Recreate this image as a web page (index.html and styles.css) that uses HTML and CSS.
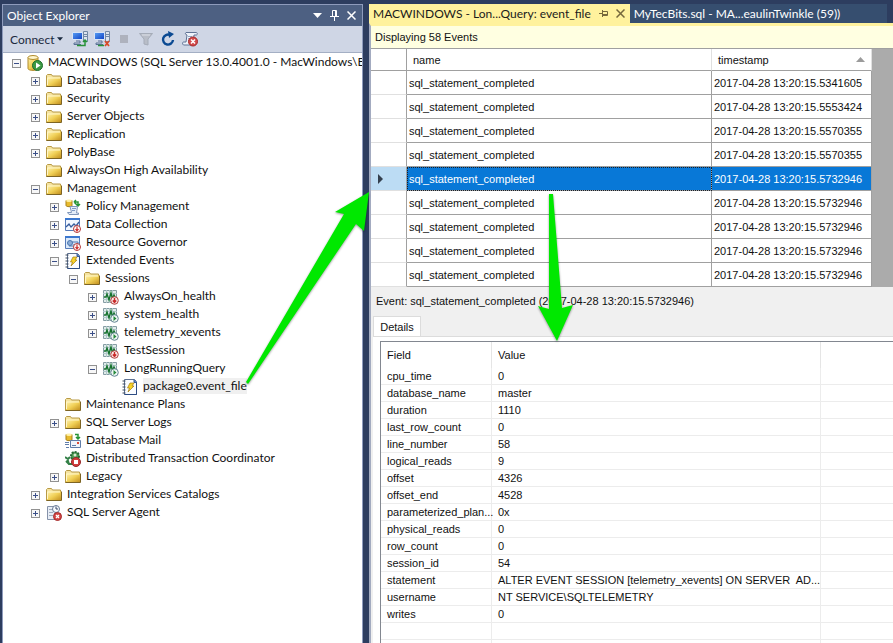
FILE: index.html
```html
<!DOCTYPE html>
<html lang="en">
<head>
	<meta charset="UTF-8">
	<title>Object Explorer</title>
	<link rel="stylesheet" href="styles.css">
</head>
<body>
	<svg class="sprite" width="0" height="0" aria-hidden="true">
		<defs>
			<linearGradient id="gold" x1="0" y1="0" x2="1" y2="1">
				<stop offset="0" stop-color="#fff3b0"/><stop offset=".5" stop-color="#f0cf55"/><stop offset="1" stop-color="#c08c1c"/>
			</linearGradient>
			<linearGradient id="screen" x1="0" y1="0" x2="1" y2="1">
				<stop offset="0" stop-color="#5aa0f5"/><stop offset="1" stop-color="#0b3fc4"/>
			</linearGradient>
		</defs>
		<symbol id="plus" viewBox="0 0 9 9">
			<rect x=".5" y=".5" width="8" height="8" fill="#f7f7f7" stroke="#919191"/>
			<path d="M2 4.500h5M4.500 2v5" stroke="#3b4f88"/>
		</symbol>
		<symbol id="minus" viewBox="0 0 9 9">
			<rect x=".5" y=".5" width="8" height="8" fill="#f7f7f7" stroke="#919191"/>
			<path d="M2 4.500h5" stroke="#3b4f88"/>
		</symbol>
		<symbol id="folder" viewBox="0 0 16 16">
			<path d="M.5 13.500v-11l1-1h4l1 1.500h8v10.500z" fill="#f5e3a0" stroke="#b89a45"/>
			<path d="M1 4.500h14v9H1z" fill="url(#gold)"/>
			<path d="M.5 13.500h15v-9" fill="none" stroke="#7d6423"/>
			<path d="M1.500 12V5H14" fill="none" stroke="#fff6c8"/>
		</symbol>
		<symbol id="server" viewBox="0 0 16 16">
			<path d="M1 2.500v11C1 16 11 16 11 13.500v-11z" fill="url(#gold)" stroke="#b08a2a"/>
			<ellipse cx="6" cy="2.500" rx="5" ry="2" fill="#fff6cc" stroke="#b08a2a"/>
			<circle cx="10.500" cy="10.500" r="5" fill="#3c9a44" stroke="#1d6b2c"/>
			<path d="M9 7.500l4.500 3L9 13.500z" fill="#fff"/>
		</symbol>
		<symbol id="policy" viewBox="0 0 16 16">
			<path d="M1 1.500v5c0 1.500 6 1.500 6 0v-5z" fill="#e8bb2d" stroke="#a9811b"/>
			<ellipse cx="4" cy="1.800" rx="3" ry="1.200" fill="#fff0a5"/>
			<path d="M9 3h4v4M9 3l2-2M9 3l2 2M11 5l2 2 2-2" fill="none" stroke="#269336" stroke-width="1.500"/>
			<path d="M5 7.500h7.500l-1 6.500h2v1.500H4l-1.500-2h4z" fill="#e4edf8" stroke="#8197ba"/>
			<path d="M7 9.500h4M7 11.500h3" stroke="#7f9ac5"/>
		</symbol>
		<symbol id="collection" viewBox="0 0 16 16">
			<path d="M.5 1.500h14v12H.5z" fill="#f2f7ff" stroke="#567bb9"/>
			<path d="M0 1h15v2H0z" fill="#3b78d0"/>
			<path d="M1 10l3-3 2 3 3-3 2 2 3-4" fill="none" stroke="#365b9c" stroke-width="1.300"/>
			<circle cx="12" cy="12" r="3.500" fill="#fff" stroke="#b33838"/>
			<path d="M12 9.500v4M10.500 12l1.500 2 1.500-2" fill="none" stroke="#cf3030" stroke-width="1.200"/>
		</symbol>
		<symbol id="governor" viewBox="0 0 16 16">
			<path d="M.5 1.500h14v12H.5z" fill="#dbe9fa" stroke="#567bb9"/>
			<path d="M0 1h15v2H0z" fill="#3b78d0"/>
			<circle cx="5" cy="8" r="2.500" fill="#8bacd6" stroke="#4c78b1"/>
			<path d="M7 7h6v3H8M4 11h4" fill="none" stroke="#4c78b1"/>
			<circle cx="12" cy="12" r="3.500" fill="#fff" stroke="#b33838"/>
			<path d="M12 9.500v4M10.500 12l1.500 2 1.500-2" fill="none" stroke="#cf3030" stroke-width="1.200"/>
		</symbol>
		<symbol id="events" viewBox="0 0 16 16">
			<path d="M2.500.5h10l2 2v13h-12z" fill="#fafcff" stroke="#5e7190"/>
			<path d="M14.500 3v12.500h-12" fill="none" stroke="#2d4c83"/>
			<path d="M12 .5v3h3" fill="#587dbe" stroke="#385c99"/>
			<path d="M.5 2h3M.5 5h3M.5 8h3M.5 11h3M.5 14h3" stroke="#3c4a5e"/>
			<path d="M8 4h4l-2 3h2l-6 6 1.500-4H5.500z" fill="#f7d327" stroke="#a37b14" stroke-width=".7"/>
		</symbol>
		<symbol id="session" viewBox="0 0 16 16">
			<path d="M.5 1.500h13v12H.5z" fill="#e1ecea" stroke="#869da4"/>
			<path d="M3.500 1v13M6.500 1v13M9.500 1v13M0 4.500h14M0 10.500h14" stroke="#b0c7ca"/>
			<path d="M1 8h2l1-3 2 6 2-7 1.500 6L11 6l1 2" fill="none" stroke="#15722d" stroke-width="1.400"/>
		</symbol>
		<symbol id="stopped" viewBox="0 0 16 16">
			<use href="#session"/>
			<circle cx="11.500" cy="11.500" r="3.800" fill="#f9e5e3" stroke="#b54242"/>
			<path d="M11.500 9v4M9.800 11.500l1.700 2 1.700-2" fill="none" stroke="#c92929" stroke-width="1.400"/>
		</symbol>
		<symbol id="running" viewBox="0 0 16 16">
			<use href="#session"/>
			<circle cx="11.500" cy="11.500" r="3.800" fill="#eef7f3" stroke="#648493"/>
			<path d="M10.500 9l3 2.500-3 2.500z" fill="#24883a"/>
		</symbol>
		<symbol id="mail" viewBox="0 0 16 16">
			<path d="M1 1.500v5c0 1.500 6 1.500 6 0v-5z" fill="#e8bb2d" stroke="#a9811b"/>
			<ellipse cx="4" cy="1.800" rx="3" ry="1.200" fill="#fff0a5"/>
			<path d="M10 1.500h3V5M11 4l2 2 2-2" fill="none" stroke="#269336" stroke-width="1.500"/>
			<path d="M5.500 7.500h10v7h-10z" fill="#f1f5fb" stroke="#607da9"/>
			<path d="M7 12.500h4M0 9.500h4M0 11.500h4M1 14.500h3" stroke="#607da9"/>
			<path d="M12 9h2v2h-2z" fill="#dd4b37"/>
		</symbol>
		<symbol id="coordinator" viewBox="0 0 16 16">
			<circle cx="10" cy="5" r="4" fill="#4c9951" stroke="#246934" stroke-dasharray="2 1" stroke-width="2"/>
			<circle cx="10" cy="4" r="1.500" fill="#d9ead5"/>
			<path d="M0 6l3 2 2-2M2 7l2 6h4M1 10l3 3" fill="none" stroke="#338047" stroke-width="2"/>
			<circle cx="11" cy="11" r="4.500" fill="#d13d3d" stroke="#962727"/>
			<path d="M9 9h4v4H9z" fill="#fff"/>
		</symbol>
		<symbol id="agent" viewBox="0 0 16 16">
			<path d="M1.500 1.500h8v13h-8z" fill="#e7edf6" stroke="#8592aa"/>
			<path d="M3 4.500h4M3 7.500h4M3 10.500h4" stroke="#a0abbd"/>
			<circle cx="10" cy="4" r="3.500" fill="#f8fbff" stroke="#667996"/>
			<path d="M10 1.500V4h2" fill="none" stroke="#34476a"/>
			<circle cx="11.500" cy="11.500" r="4" fill="#d54545" stroke="#a32b2b"/>
			<path d="M10 10l3 3M13 10l-3 3" stroke="#fff" stroke-width="1.300"/>
		</symbol>
		<symbol id="computer" viewBox="0 0 16 16">
			<path d="M11.500.5h4v10h-4z" fill="#dce4ee" stroke="#7288a5"/>
			<path d="M12 3.500h3M12 5.500h3" stroke="#7288a5"/>
			<path d="M.5 1.500h10v7H.5z" fill="url(#screen)" stroke="#d7e4f7"/>
			<path d="M4 10h4v2H2v1.500h7" fill="none" stroke="#587195"/>
		</symbol>
		<symbol id="connect" viewBox="0 0 16 16">
			<use href="#computer"/>
			<path d="M5 14.500h8V9M11 11l2-2 2 2" fill="none" stroke="#289338" stroke-width="1.500"/>
		</symbol>
		<symbol id="disconnect" viewBox="0 0 16 16">
			<use href="#computer"/>
			<path d="M4 14.500h6" stroke="#289338" stroke-width="1.500"/>
			<path d="M11 10l4 5M15 10l-4 5" stroke="#d84b28" stroke-width="1.800"/>
		</symbol>
		<symbol id="stop" viewBox="0 0 16 16"><path d="M4 4h8v8H4z" fill="#aeb2bd"/></symbol>
		<symbol id="filter" viewBox="0 0 16 16">
			<path d="M1.500 2.500h13L10 8v6l-4-1V8z" fill="#b8bdc7" stroke="#a5acb8"/>
			<path d="M4 4h8" stroke="#dce0e8"/>
		</symbol>
		<symbol id="refresh" viewBox="0 0 16 16">
			<path d="M13 9a5 5 0 1 1-3-5" fill="none" stroke="#0b4a92" stroke-width="2.400"/>
			<path d="M8 0l6 3-5 4z" fill="#0b4a92"/>
		</symbol>
		<symbol id="script" viewBox="0 0 16 16">
			<path d="M4 1.500h10.500c1 0 1 2.500 0 2.500H12l-1 10H1.500c-1.500-1-1-3 0-3H4l1-7C3 3.500 3 2 4 1.500z" fill="#edf2fa" stroke="#607496"/>
			<path d="M6 5.500h4M6 7.500h4" stroke="#91a4c0"/>
			<circle cx="11" cy="10.500" r="4.500" fill="#d34a4a" stroke="#a52a2a"/>
			<path d="M9 8.500l4 4M13 8.500l-4 4" stroke="#fff" stroke-width="1.500"/>
		</symbol>
		<symbol id="down" viewBox="0 0 9 9"><path d="M0 2h9L4.500 7z" fill="currentColor"/></symbol>
		<symbol id="pin" viewBox="0 0 9 11"><path d="M2.500 6V.5h4V6M5.500 1v5M0 6.500h9M4.500 7v4" fill="none" stroke="currentColor"/></symbol>
		<symbol id="pin-side" viewBox="0 0 9 9"><path d="M0 4.500h3M3.500 1v7M4 2.500h4.500v4H4M4 5.500h4" fill="none" stroke="currentColor"/></symbol>
		<symbol id="close" viewBox="0 0 9 9"><path d="M.5.5l8 8M8.500.5l-8 8" fill="none" stroke="currentColor" stroke-width="1.500"/></symbol>
	</svg>

	<div class="window">
		<aside class="explorer">
			<header class="title-bar">
				<h1>Object Explorer</h1>
				<button class="small-button" aria-label="Window position"><svg><use href="#down"/></svg></button>
				<button class="small-button" aria-label="Auto hide"><svg class="tall"><use href="#pin"/></svg></button>
				<button class="small-button" aria-label="Close"><svg><use href="#close"/></svg></button>
			</header>
			<div class="toolbar">
				<button class="connect">Connect <svg><use href="#down"/></svg></button>
				<button class="tool" aria-label="Connect Object Explorer"><svg><use href="#connect"/></svg></button>
				<button class="tool" aria-label="Disconnect"><svg><use href="#disconnect"/></svg></button>
				<button class="tool" aria-label="Stop" disabled><svg><use href="#stop"/></svg></button>
				<button class="tool" aria-label="Filter" disabled><svg><use href="#filter"/></svg></button>
				<button class="tool" aria-label="Refresh"><svg><use href="#refresh"/></svg></button>
				<button class="tool" aria-label="Script error"><svg><use href="#script"/></svg></button>
			</div>
			<ul class="tree">
				<li>
					<div class="node"><button class="expander" aria-label="Collapse"><svg><use href="#minus"/></svg></button><svg class="icon"><use href="#server"/></svg><span>MACWINDOWS (SQL Server 13.0.4001.0 - MacWindows\Bea</span></div>
					<ul>
						<li><div class="node"><button class="expander" aria-label="Expand"><svg><use href="#plus"/></svg></button><svg class="icon"><use href="#folder"/></svg><span>Databases</span></div></li>
						<li><div class="node"><button class="expander" aria-label="Expand"><svg><use href="#plus"/></svg></button><svg class="icon"><use href="#folder"/></svg><span>Security</span></div></li>
						<li><div class="node"><button class="expander" aria-label="Expand"><svg><use href="#plus"/></svg></button><svg class="icon"><use href="#folder"/></svg><span>Server Objects</span></div></li>
						<li><div class="node"><button class="expander" aria-label="Expand"><svg><use href="#plus"/></svg></button><svg class="icon"><use href="#folder"/></svg><span>Replication</span></div></li>
						<li><div class="node"><button class="expander" aria-label="Expand"><svg><use href="#plus"/></svg></button><svg class="icon"><use href="#folder"/></svg><span>PolyBase</span></div></li>
						<li><div class="node leaf"><svg class="icon"><use href="#folder"/></svg><span>AlwaysOn High Availability</span></div></li>
						<li>
							<div class="node"><button class="expander" aria-label="Collapse"><svg><use href="#minus"/></svg></button><svg class="icon"><use href="#folder"/></svg><span>Management</span></div>
							<ul>
								<li><div class="node"><button class="expander" aria-label="Expand"><svg><use href="#plus"/></svg></button><svg class="icon"><use href="#policy"/></svg><span>Policy Management</span></div></li>
								<li><div class="node"><button class="expander" aria-label="Expand"><svg><use href="#plus"/></svg></button><svg class="icon"><use href="#collection"/></svg><span>Data Collection</span></div></li>
								<li><div class="node"><button class="expander" aria-label="Expand"><svg><use href="#plus"/></svg></button><svg class="icon"><use href="#governor"/></svg><span>Resource Governor</span></div></li>
								<li>
									<div class="node"><button class="expander" aria-label="Collapse"><svg><use href="#minus"/></svg></button><svg class="icon"><use href="#events"/></svg><span>Extended Events</span></div>
									<ul>
										<li>
											<div class="node"><button class="expander" aria-label="Collapse"><svg><use href="#minus"/></svg></button><svg class="icon"><use href="#folder"/></svg><span>Sessions</span></div>
											<ul>
												<li><div class="node"><button class="expander" aria-label="Expand"><svg><use href="#plus"/></svg></button><svg class="icon"><use href="#stopped"/></svg><span>AlwaysOn_health</span></div></li>
												<li><div class="node"><button class="expander" aria-label="Expand"><svg><use href="#plus"/></svg></button><svg class="icon"><use href="#running"/></svg><span>system_health</span></div></li>
												<li><div class="node"><button class="expander" aria-label="Expand"><svg><use href="#plus"/></svg></button><svg class="icon"><use href="#running"/></svg><span>telemetry_xevents</span></div></li>
												<li><div class="node leaf"><svg class="icon"><use href="#stopped"/></svg><span>TestSession</span></div></li>
												<li>
													<div class="node"><button class="expander" aria-label="Collapse"><svg><use href="#minus"/></svg></button><svg class="icon"><use href="#running"/></svg><span>LongRunningQuery</span></div>
													<ul>
														<li><div class="node leaf"><svg class="icon"><use href="#events"/></svg><span class="selected">package0.event_file</span></div></li>
													</ul>
												</li>
											</ul>
										</li>
									</ul>
								</li>
								<li><div class="node leaf"><svg class="icon"><use href="#folder"/></svg><span>Maintenance Plans</span></div></li>
								<li><div class="node"><button class="expander" aria-label="Expand"><svg><use href="#plus"/></svg></button><svg class="icon"><use href="#folder"/></svg><span>SQL Server Logs</span></div></li>
								<li><div class="node leaf"><svg class="icon"><use href="#mail"/></svg><span>Database Mail</span></div></li>
								<li><div class="node leaf"><svg class="icon"><use href="#coordinator"/></svg><span>Distributed Transaction Coordinator</span></div></li>
								<li><div class="node"><button class="expander" aria-label="Expand"><svg><use href="#plus"/></svg></button><svg class="icon"><use href="#folder"/></svg><span>Legacy</span></div></li>
							</ul>
						</li>
						<li><div class="node"><button class="expander" aria-label="Expand"><svg><use href="#plus"/></svg></button><svg class="icon"><use href="#folder"/></svg><span>Integration Services Catalogs</span></div></li>
						<li><div class="node"><button class="expander" aria-label="Expand"><svg><use href="#plus"/></svg></button><svg class="icon"><use href="#agent"/></svg><span>SQL Server Agent</span></div></li>
					</ul>
				</li>
			</ul>
		</aside>

		<main class="document">
			<nav class="tabs">
				<div class="tab active">
					<a href="#events-grid">MACWINDOWS - Lon...Query: event_file</a>
					<button class="small-button" aria-label="Pin tab"><svg><use href="#pin-side"/></svg></button>
					<button class="small-button" aria-label="Close tab"><svg><use href="#close"/></svg></button>
				</div>
				<div class="tab"><a href="#sql">MyTecBits.sql - MA...eaulinTwinkle (59))</a></div>
			</nav>
			<div class="viewer">
				<p class="count">Displaying 58 Events</p>
				<div class="grid-area">
					<table class="events" id="events-grid">
						<colgroup><col class="col-marker"><col><col class="col-time"></colgroup>
						<thead>
							<tr><th></th><th>name</th><th><div class="sorted">timestamp <svg viewBox="0 0 9 5"><path d="M0 5h9L4.500 0z" fill="#9b9b9b"/></svg></div></th></tr>
						</thead>
						<tbody>
							<tr><td></td><td>sql_statement_completed</td><td>2017-04-28 13:20:15.5341605</td></tr>
							<tr><td></td><td>sql_statement_completed</td><td>2017-04-28 13:20:15.5553424</td></tr>
							<tr><td></td><td>sql_statement_completed</td><td>2017-04-28 13:20:15.5570355</td></tr>
							<tr><td></td><td>sql_statement_completed</td><td>2017-04-28 13:20:15.5570355</td></tr>
							<tr class="current"><td><svg viewBox="0 0 5 10"><path d="M0 0v10l5-5z" fill="#34404e"/></svg></td><td>sql_statement_completed</td><td>2017-04-28 13:20:15.5732946</td></tr>
							<tr><td></td><td>sql_statement_completed</td><td>2017-04-28 13:20:15.5732946</td></tr>
							<tr><td></td><td>sql_statement_completed</td><td>2017-04-28 13:20:15.5732946</td></tr>
							<tr><td></td><td>sql_statement_completed</td><td>2017-04-28 13:20:15.5732946</td></tr>
							<tr><td></td><td>sql_statement_completed</td><td>2017-04-28 13:20:15.5732946</td></tr>
						</tbody>
					</table>
				</div>
				<section class="event">
					<h2>Event: sql_statement_completed (2017-04-28 13:20:15.5732946)</h2>
					<button class="details-tab">Details</button>
					<div class="details-page">
						<table class="details">
							<colgroup><col class="col-field"><col class="col-value"><col></colgroup>
							<thead><tr><th>Field</th><th>Value</th><th></th></tr></thead>
							<tbody>
								<tr><td>cpu_time</td><td>0</td><td></td></tr>
								<tr><td>database_name</td><td>master</td><td></td></tr>
								<tr><td>duration</td><td>1110</td><td></td></tr>
								<tr><td>last_row_count</td><td>0</td><td></td></tr>
								<tr><td>line_number</td><td>58</td><td></td></tr>
								<tr><td>logical_reads</td><td>9</td><td></td></tr>
								<tr><td>offset</td><td>4326</td><td></td></tr>
								<tr><td>offset_end</td><td>4528</td><td></td></tr>
								<tr><td>parameterized_plan...</td><td>0x</td><td></td></tr>
								<tr><td>physical_reads</td><td>0</td><td></td></tr>
								<tr><td>row_count</td><td>0</td><td></td></tr>
								<tr><td>session_id</td><td>54</td><td></td></tr>
								<tr><td>statement</td><td>ALTER EVENT SESSION [telemetry_xevents] ON SERVER&nbsp; AD...</td><td></td></tr>
								<tr><td>username</td><td>NT SERVICE\SQLTELEMETRY</td><td></td></tr>
								<tr><td>writes</td><td>0</td><td></td></tr>
								<tr><td></td><td></td><td></td></tr>
								<tr><td></td><td></td><td></td></tr>
							</tbody>
						</table>
					</div>
				</section>
			</div>
		</main>
	</div>

	<svg class="arrow arrow-file" viewBox="0 0 126 196"><path d="M0 190L98 22l-9-2L123 0l-5 39-8-7L2 192z"/></svg>
	<svg class="arrow arrow-event" viewBox="0 0 36 148"><path d="M12 0h4l9 114 11-3-16 36L1 112l11 3z"/></svg>
</body>
</html>
```
FILE: styles.css
```css
* {
  box-sizing: border-box;
  margin: 0;
  padding: 0;
}

body {
  height: 100vh;
  overflow: hidden;
  background: #2d3d5f;
  color: #111;
  font: 12px Lato, "Open Sans", sans-serif;
}

button {
  border: none;
  background: none;
  color: inherit;
  font: inherit;
}

a {
  color: inherit;
  text-decoration: none;
}

svg {
  display: block;
  flex: none;
}

ul {
  list-style: none;
}

table {
  border-collapse: separate;
  border-spacing: 0;
  table-layout: fixed;
}

.sprite {
  position: absolute;
}

.window {
  display: flex;
  gap: 6px;
  height: 100%;
  padding: 4px 0 0 2px;
}

/* object explorer */
.explorer {
  display: flex;
  flex-direction: column;
  flex: 0 1 361px;
  min-width: 0;
  border: solid #8e9bbc;
  border-width: 1px 1px 0;
  background: #fff;
}

.title-bar {
  display: flex;
  align-items: center;
  gap: 8px;
  height: 21px;
  padding: 0 6px 0 4px;
  background: #4d6082;
  color: #fff;
}

.title-bar h1 {
  flex: 1;
  font-size: 12px;
  font-weight: normal;
}

.small-button svg {
  width: 9px;
  height: 9px;
}

.small-button svg.tall {
  height: 11px;
}

.toolbar {
  display: flex;
  align-items: center;
  gap: 6px;
  height: 27px;
  padding: 0 7px;
  border-bottom: 1px solid #a4afc4;
  background: #cfd6e5;
}

.connect {
  display: flex;
  align-items: center;
  gap: 3px;
  margin-right: 3px;
  color: #1b293e;
}

.connect svg {
  width: 6px;
  height: 6px;
}

.tool svg {
  width: 16px;
  height: 16px;
}

.tree {
  flex: 1;
  overflow: hidden;
  padding: 1px 0 0 9px;
}

.tree ul {
  padding-left: 19px;
}

.node {
  display: flex;
  align-items: center;
  height: 18px;
  line-height: 16px;
  white-space: nowrap;
}

.node span {
  margin-bottom: 2px;
}

.leaf {
  padding-left: 15px;
}

.expander {
  margin-right: 6px;
}

.expander svg {
  width: 9px;
  height: 9px;
}

.icon {
  width: 16px;
  height: 16px;
  margin-right: 5px;
}

.selected {
  background: #f0f0f0;
}

/* document well */
.document {
  display: flex;
  flex-direction: column;
  flex: 1;
  min-width: 0;
}

.tabs {
  display: flex;
  height: 19px;
}

.tab {
  display: flex;
  align-items: center;
  gap: 9px;
  flex: 0 0 257px;
  padding: 0 4px;
  background: #364e6f;
  color: #fff;
  white-space: nowrap;
}

.tab.active {
  flex-basis: 259px;
  gap: 8px;
  padding-right: 5px;
  background: #fff29d;
  color: #1b1b1b;
}

.tab a {
  flex: 1;
  min-width: 0;
}

.tab .small-button {
  color: #75683c;
}

.viewer {
  display: flex;
  flex-direction: column;
  flex: 1;
  min-height: 0;
  border-top: 3px solid #fff29d;
  border-left: 2px solid #a3abc0;
  background: #f0f0f0;
  font: 11px "Liberation Sans", Arial, sans-serif;
}

.count {
  height: 23px;
  padding-left: 4px;
  border-bottom: 1px solid #a0a0a0;
  background: #ffffe1;
  line-height: 23px;
}

.grid-area {
  padding-right: 21px;
  background: #ababab;
}

.events {
  width: 100%;
  background: #fff;
}

.col-marker {
  width: 36px;
}

.col-time {
  width: 160px;
}

.events th {
  height: 22px;
  padding: 0 6px;
  border-right: 1px solid #e0e0e0;
  border-bottom: 1px solid #a0a0a0;
  font-weight: normal;
  text-align: left;
}

.events td {
  height: 24px;
  padding: 0 2px;
  border-right: 1px solid #a0a0a0;
  border-bottom: 1px solid #a0a0a0;
}

.events th:first-child {
  border-right-color: #a0a0a0;
}

.events td:first-child {
  padding-left: 7px;
  border-bottom-color: #e0e0e0;
}

.sorted {
  display: flex;
  align-items: center;
  justify-content: space-between;
}

.sorted svg {
  width: 9px;
  height: 5px;
}

.current td {
  background: #0878d7;
  color: #fff;
}

.current td:nth-child(2) {
  outline: 1px dotted #17202a;
  outline-offset: -1px;
}

.current td:first-child {
  background: #bcdcf4;
}

.current svg {
  width: 5px;
  height: 10px;
}

/* selected event */
.event {
  display: flex;
  flex-direction: column;
  align-items: flex-start;
  flex: 1;
  min-height: 0;
  padding-left: 2px;
}

.event h2 {
  height: 29px;
  padding-left: 3px;
  font-size: 11px;
  font-weight: normal;
  line-height: 29px;
}

.details-tab {
  width: 48px;
  height: 20px;
  border: solid #dcdcdc;
  border-width: 1px 1px 0;
  background: #fff;
}

.details-page {
  flex: 1;
  align-self: stretch;
  min-height: 0;
  overflow: hidden;
  padding: 4px 0 0 7px;
  border-top: 1px solid #dcdcdc;
  background: #fff;
}

.details {
  width: 100%;
  border-top: 1px solid #828790;
  border-left: 1px solid #828790;
}

.col-field {
  width: 111px;
}

.col-value {
  width: 329px;
}

.details th {
  height: 26px;
  padding-left: 6px;
  border-right: 1px solid #e5e5e5;
  font-weight: normal;
  text-align: left;
}

.details td {
  height: 17px;
  padding-left: 6px;
  border-right: 1px solid #ececec;
  border-bottom: 1px solid #ececec;
  white-space: nowrap;
}

.details th:last-child,
.details td:last-child {
  border-right: none;
}

/* callout arrows over the window */
.arrow {
  position: absolute;
  fill: #00e800;
  filter: drop-shadow(0 1px 1px rgba(0, 0, 0, .4));
  pointer-events: none;
}

.arrow-file {
  left: 246px;
  top: 192px;
  width: 126px;
  height: 196px;
}

.arrow-event {
  left: 537px;
  top: 194px;
  width: 36px;
  height: 148px;
}
```
